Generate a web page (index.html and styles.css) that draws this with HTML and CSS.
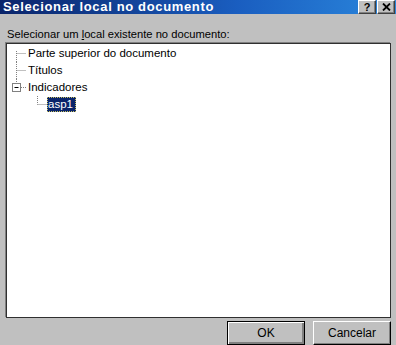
FILE: index.html
```html
<!DOCTYPE html>
<html lang="pt">
<head>
<meta charset="utf-8">
<title>Selecionar local no documento</title>
<link rel="stylesheet" href="styles.css">
</head>
<body>
<div class="window">
  <div class="titlebar">
    <span class="title">Selecionar local no documento</span>
    <div class="tbuttons">
      <span class="tbtn">?</span>
      <span class="tbtn"><svg width="9" height="8" viewBox="0 0 9 8"><path d="M1 0.5L8 7.5M8 0.5L1 7.5" stroke="#000" stroke-width="1.8" fill="none"/></svg></span>
    </div>
  </div>
  <div class="content">
    <div class="label">Selecionar um <u>l</u>ocal existente no documento:</div>
    <div class="listbox">
      <div class="row">
        <svg class="conn" width="20" height="17" viewBox="0 0 20 17"><path d="M9.5 6V17M9.5 8.5H19" stroke="#808080" stroke-dasharray="1 1" fill="none"/></svg>
        <span class="item">Parte superior do documento</span>
      </div>
      <div class="row">
        <svg class="conn" width="20" height="17" viewBox="0 0 20 17"><path d="M9.5 0V17M9.5 8.5H19" stroke="#808080" stroke-dasharray="1 1" fill="none"/></svg>
        <span class="item">Títulos</span>
      </div>
      <div class="row">
        <svg class="conn" width="20" height="17" viewBox="0 0 20 17"><path d="M9.5 0V4M14 8.5H19" stroke="#808080" stroke-dasharray="1 1" fill="none"/><rect x="5.5" y="4.5" width="8" height="8" fill="#fff" stroke="#808080"/><path d="M7.5 8.5H11.5" stroke="#000"/></svg>
        <span class="item">Indicadores</span>
      </div>
      <div class="row">
        <span class="indent"></span>
        <svg class="conn" width="20" height="17" viewBox="0 0 20 17"><path d="M10.5 0V8.5M10.5 8.5H20" stroke="#808080" stroke-dasharray="1 1" fill="none"/></svg>
        <span class="item selected">asp1</span>
      </div>
    </div>
    <div class="footer">
      <button class="btn default">OK</button>
      <button class="btn">Cancelar</button>
    </div>
  </div>
</div>
</body>
</html>
```
FILE: styles.css
```css
html, body {
  margin: 0;
  padding: 0;
}
body {
  width: 396px;
  height: 345px;
  overflow: hidden;
  background: #c0c0c0;
  font-family: "Liberation Sans", Arial, sans-serif;
  font-size: 11px;
  color: #000;
}
.titlebar {
  height: 14px;
  display: flex;
  align-items: center;
  justify-content: space-between;
  padding: 0 1px 0 3px;
  background: linear-gradient(to right, #0a246a 0%, #1a5ec0 60%, #2a86dc 100%);
}
.title {
  color: #fff;
  font-weight: bold;
  font-size: 13px;
  letter-spacing: 0.65px;
  line-height: 14px;
}
.tbuttons {
  display: flex;
  gap: 1px;
  align-self: flex-start;
}
.tbtn {
  box-sizing: border-box;
  width: 18px;
  height: 14px;
  display: flex;
  align-items: center;
  justify-content: center;
  background: #c0c0c0;
  border-top: 1px solid #fff;
  border-left: 1px solid #fff;
  border-right: 1px solid #404040;
  border-bottom: 1px solid #404040;
  box-shadow: inset -1px -1px 0 #808080;
  font-weight: bold;
  font-size: 11px;
  line-height: 12px;
  color: #000;
}
.tbtn svg {
  display: block;
}
.content {
  padding: 0 5px 0 6px;
}
.label {
  margin-top: 13px;
  height: 16px;
  line-height: 14px;
  padding-left: 1px;
  font-size: 11.2px;
}
.listbox {
  box-sizing: border-box;
  height: 275px;
  background: #fff;
  border: 1px solid #303030;
  box-shadow: -1px -1px 0 #808080;
  padding-top: 1px;
}
.row {
  display: flex;
  align-items: center;
  height: 17px;
}
.conn {
  display: block;
  flex: none;
}
.indent {
  width: 20px;
  flex: none;
}
.item {
  font-size: 11.5px;
  line-height: 15px;
  padding: 0 2px 0 1px;
}
.item.selected {
  background: #0a246a;
  color: #fff;
  outline: 1px dotted #c8c060;
  outline-offset: -1px;
  padding: 0 3px 0 1px;
}
.footer {
  display: flex;
  justify-content: flex-end;
  gap: 8px;
  margin-top: 3px;
  padding-right: 0;
}
.btn {
  box-sizing: border-box;
  width: 78px;
  height: 24px;
  background: #c0c0c0;
  font-family: "Liberation Sans", Arial, sans-serif;
  font-size: 12px;
  color: #000;
  border-top: 1px solid #fff;
  border-left: 1px solid #fff;
  border-right: 1px solid #000;
  border-bottom: 1px solid #000;
  box-shadow: inset -1px -1px 0 #808080;
  padding: 0;
  margin: 0;
}
.btn.default {
  border: 1px solid #000;
  box-shadow: inset 1px 1px 0 #fff, inset -2px -2px 0 #808080;
}
```
